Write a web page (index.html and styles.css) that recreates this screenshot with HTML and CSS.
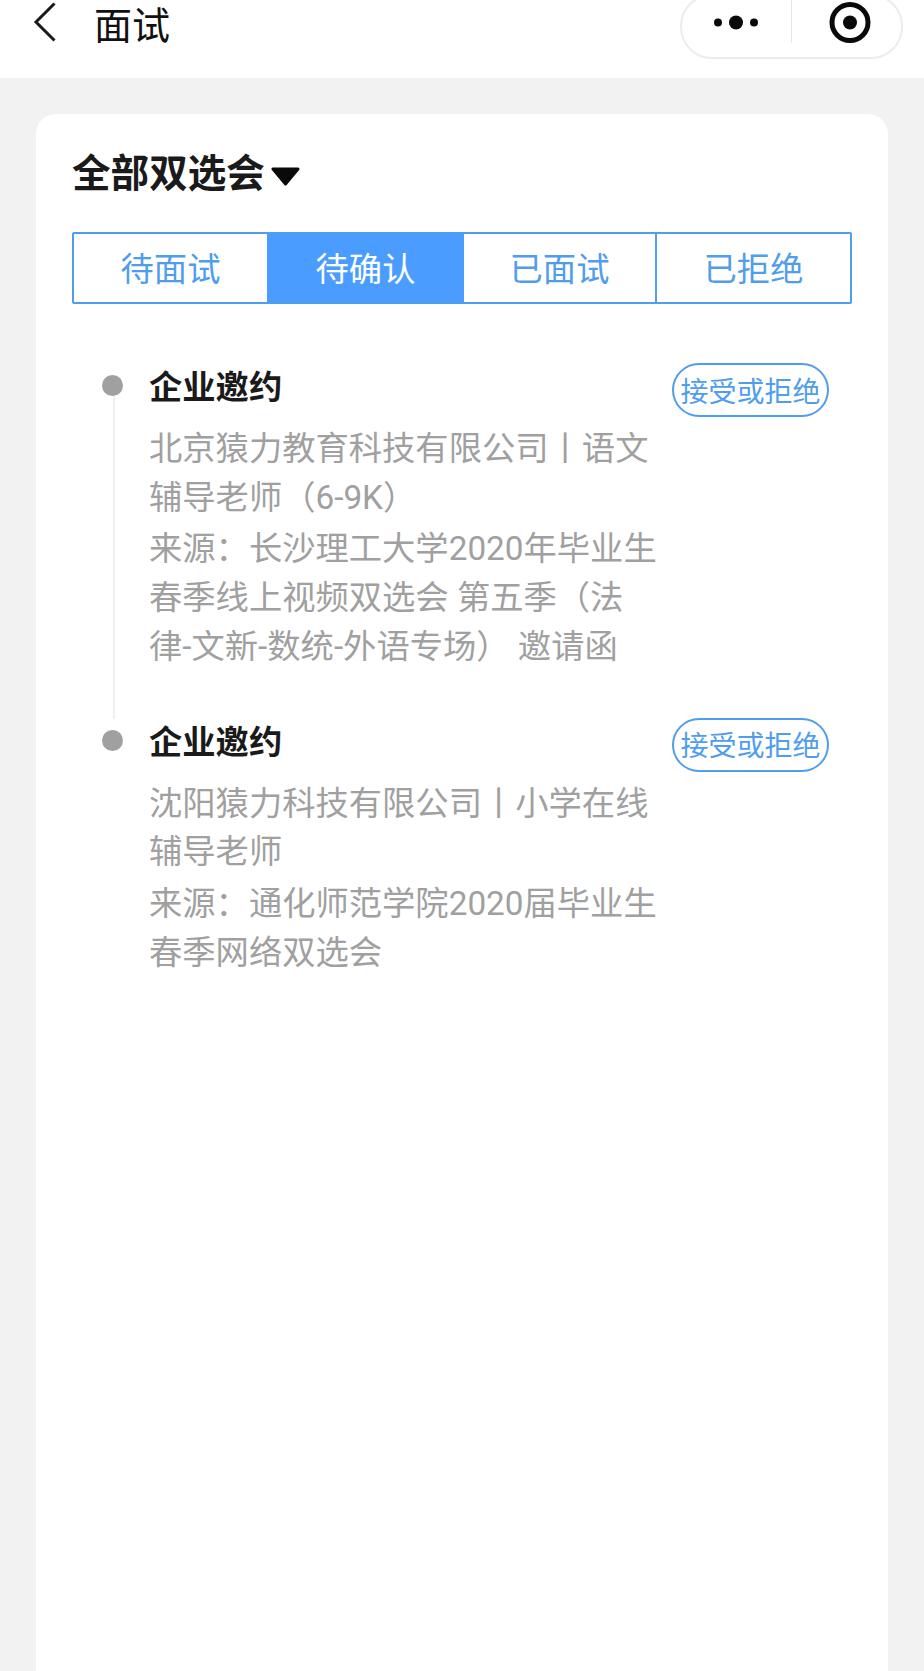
FILE: index.html
```html
<!DOCTYPE html>
<html lang="zh-CN">
<head>
<meta charset="utf-8">
<title>面试</title>
<link rel="stylesheet" href="styles.css">
</head>
<body>
<div class="page">
  <header class="nav">
    <svg class="back" width="24" height="40" viewBox="0 0 24 40"><path d="M21.5 1.500 L3 20 L21.5 38.500" fill="none" stroke="#1a1a1a" stroke-width="3"/></svg>
    <h1 class="nav-title">面试</h1>
    <div class="capsule">
      <svg class="capsule-icon" width="223" height="65" viewBox="0 0 223 65">
        <circle cx="38" cy="28.500" r="4" fill="#0a0a0a"/>
        <circle cx="56" cy="28.500" r="7" fill="#0a0a0a"/>
        <circle cx="74" cy="28.500" r="4" fill="#0a0a0a"/>
        <rect x="111" y="0" width="1" height="49" fill="#e6e6e6"/>
        <circle cx="170" cy="28.500" r="18" fill="none" stroke="#0a0a0a" stroke-width="5"/>
        <circle cx="170" cy="28.500" r="7" fill="#0a0a0a"/>
      </svg>
    </div>
  </header>
  <main class="card">
    <div class="filter">
      <span class="filter-text">全部双选会</span>
      <svg class="caret" width="29" height="19" viewBox="0 0 29 19"><path d="M2 2 H27 L14.500 17 Z" fill="#0a0a0a" stroke="#0a0a0a" stroke-width="3" stroke-linejoin="round"/></svg>
    </div>
    <nav class="tabs">
      <div class="tab tab-a">待面试</div>
      <div class="tab tab-b tab-active">待确认</div>
      <div class="tab tab-c">已面试</div>
      <div class="tab tab-d">已拒绝</div>
    </nav>
    <section class="timeline">
      <article class="item">
        <div class="rail"><span class="dot"></span><span class="line"></span></div>
        <div class="main">
          <h2 class="item-title">企业邀约</h2>
          <p class="desc">北京猿力教育科技有限公司丨语文<br>辅导老师&#xFF08;6-9K&#xFF09;</p>
          <p class="desc">来源&#xFF1A;长沙理工大学2020年毕业生<br>春季线上视频双选会 第五季&#xFF08;法<br>律-文新-数统-外语专场&#xFF09; 邀请函</p>
        </div>
        <button class="action">接受或拒绝</button>
      </article>
      <article class="item">
        <div class="rail"><span class="dot"></span></div>
        <div class="main">
          <h2 class="item-title">企业邀约</h2>
          <p class="desc">沈阳猿力科技有限公司丨小学在线<br>辅导老师</p>
          <p class="desc">来源&#xFF1A;通化师范学院2020届毕业生<br>春季网络双选会</p>
        </div>
        <button class="action">接受或拒绝</button>
      </article>
    </section>
  </main>
</div>
</body>
</html>
```

FILE: styles.css
```css
* { box-sizing: border-box; }
html, body { margin: 0; padding: 0; }
body {
  background: #f2f2f2;
  font-family: Roboto, "Noto Sans CJK SC", "Liberation Sans", sans-serif;
}
.page {
  height: 1671px;
  overflow: hidden;
  display: flex;
  flex-direction: column;
}
.nav {
  position: relative;
  flex: none;
  height: 78px;
  background: #fff;
  display: flex;
  align-items: flex-start;
  padding: 2px 0 0 33px;
}
.back { flex: none; }
.nav-title {
  margin: 2px 0 0 37px;
  font-size: 38px;
  line-height: 44px;
  font-weight: 400;
  color: #111;
}
.capsule {
  position: absolute;
  left: 680px;
  top: -6px;
  width: 223px;
  height: 65px;
  border: 2px solid #ececec;
  border-radius: 32px;
  background: #fff;
}
.capsule-icon { position: absolute; left: -2px; top: -2px; }
.card {
  flex: 1;
  margin: 36px 36px 0;
  padding: 36px 36px 0;
  background: #fff;
  border-radius: 20px 20px 0 0;
}
.filter {
  display: flex;
  align-items: center;
  height: 46px;
  gap: 6px;
}
.filter-text {
  font-size: 38.600px;
  font-weight: 700;
  line-height: 46px;
  padding-top: 1px;
  color: #1a1a1a;
}
.caret { margin-top: 7px; }
.tabs {
  display: flex;
  margin-top: 36px;
  height: 72px;
  width: 780px;
  border: 2px solid #4f9ded;
  border-radius: 2px;
}
.tab {
  display: flex;
  align-items: center;
  justify-content: center;
  padding-bottom: 3px;
  font-size: 33.300px;
  color: #4f9ded;
}
.tab-a { width: 193px; }
.tab-b { width: 197px; }
.tab-c { width: 191px; }
.tab-d { flex: 1; border-left: 2px solid #4f9ded; }
.tab-active { background: #4a9dff; color: #fff; }
.timeline {
  margin-top: 60px;
  padding: 0 23px 0 30px;
}
.item { display: flex; align-items: stretch; }
.rail {
  flex: none;
  width: 21px;
  display: flex;
  flex-direction: column;
  align-items: center;
  padding-top: 11px;
}
.dot {
  flex: none;
  width: 21px;
  height: 21px;
  border-radius: 50%;
  background: #a0a0a0;
}
.line {
  flex: 1;
  width: 2px;
  margin-left: 2px;
  background: #efefef;
}
.main {
  flex: none;
  width: 520px;
  margin-left: 26px;
  padding-top: 2px;
  padding-bottom: 44px;
}
.item-title {
  margin: 0 0 15px;
  font-size: 33.300px;
  line-height: 44px;
  font-weight: 700;
  color: #1a1a1a;
}
.desc {
  margin: 0 0 3px;
  font-size: 33.300px;
  line-height: 48.700px;
  color: #a0a0a0;
  white-space: nowrap;
}
.action {
  flex: none;
  align-self: flex-start;
  margin-top: -1px;
  margin-left: auto;
  width: 157px;
  height: 54px;
  padding: 5px 0 0;
  border: 2px solid #4f9ded;
  border-radius: 27px;
  background: #fff;
  color: #4f9ded;
  font-family: inherit;
  font-size: 28px;
  line-height: 44px;
  white-space: nowrap;
}
```
